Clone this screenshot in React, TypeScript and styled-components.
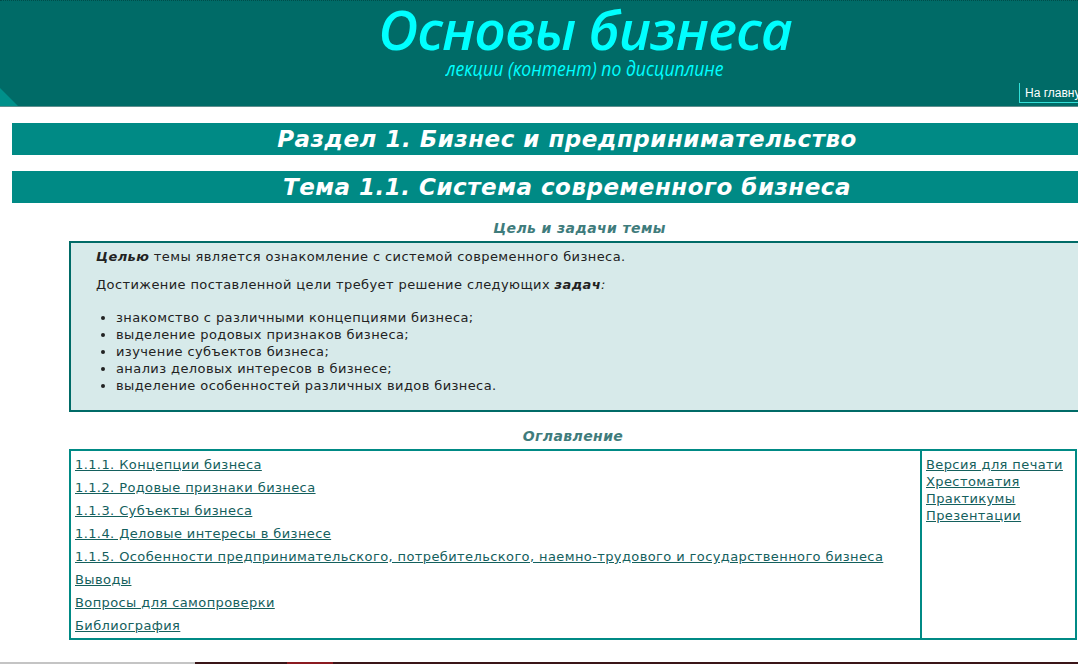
import React from "react";
import styled, { createGlobalStyle } from "styled-components";

const Global = createGlobalStyle`
  html, body { margin: 0; padding: 0; overflow: hidden; background: #fff; }
  body { font-family: "DejaVu Sans", Verdana, sans-serif; font-size: 13px; letter-spacing: 0.4px; color: #222; }
`;

const Page = styled.div`
  width: 1170px;
`;

const Header = styled.header`
  position: relative;
  height: 107px;
  background: #006b67;
  border-top: 1px dotted #004c49;
  border-bottom: 1px solid #5f8f8e;
  box-sizing: border-box;
  display: flex;
  flex-direction: column;
  align-items: center;
  &::before {
    content: "";
    position: absolute;
    left: 0;
    bottom: 0;
    width: 0;
    height: 0;
    border-left: 18px solid #00908a;
    border-top: 18px solid transparent;
  }
`;

const Title = styled.h1`
  margin: 0;
  font-family: "Open Sans", sans-serif;
  font-style: italic;
  font-weight: 600;
  font-size: 55px;
  line-height: 56px;
  color: #00ffff;
  letter-spacing: -1px;
`;

const Subtitle = styled.div`
  font-family: "Open Sans", sans-serif;
  font-style: italic;
  font-size: 20px;
  line-height: 24px;
  letter-spacing: 0;
  color: #00ffff;
  transform: scaleX(0.88);
`;

const NavRow = styled.div`
  align-self: stretch;
  display: flex;
  padding-left: 1019px;
  margin-top: 2px;
`;

const HomeLink = styled.a`
  font-family: "Liberation Sans", Arial, sans-serif;
  font-size: 12px;
  letter-spacing: 0;
  color: #fff;
  text-decoration: none;
  padding: 3px 0 2px 5px;
  border-left: 1px solid #33e0d8;
  border-bottom: 1px solid #33e0d8;
  white-space: nowrap;
`;

const Main = styled.main`
  padding: 16px 0 0 12px;
  display: flex;
  flex-direction: column;
`;

const Band = styled.h2`
  margin: 0 0 16px 0;
  height: 32px;
  width: 1110px;
  background: #008a85;
  color: #fff;
  font-family: "DejaVu Sans", Verdana, sans-serif;
  font-style: italic;
  font-weight: bold;
  font-size: 23px;
  letter-spacing: 0.5px;
  line-height: 32px;
  text-align: center;
`;

const Section = styled.section<{ $w: number }>`
  margin-left: 57px;
  width: ${(p) => p.$w}px;
  display: flex;
  flex-direction: column;
`;

const SectionTitle = styled.div`
  text-align: center;
  font-weight: bold;
  font-style: italic;
  font-size: 14px;
  letter-spacing: 0.4px;
  color: #3f7c7c;
  line-height: 18px;
  margin-bottom: 4px;
`;

const GoalBox = styled.div`
  background: #d7eaea;
  border: 2px solid #006b67;
  padding: 5px 20px 16px 25px;
`;

const P = styled.p`
  margin: 0 0 11px 0;
  line-height: 17px;
`;

const List = styled.ul`
  margin: 16px 0 0 0;
  padding-left: 20px;
  li { line-height: 17px; }
`;

const Toc = styled.div`
  display: grid;
  grid-template-columns: 1fr 153px;
  border: 2px solid #008a85;
`;

const TocMain = styled.div`
  display: flex;
  flex-direction: column;
  padding: 2px 4px 1px 4px;
  border-right: 2px solid #008a85;
`;

const TocSide = styled.div`
  display: flex;
  flex-direction: column;
  align-items: flex-start;
  padding: 5px 4px;
`;

const Link = styled.a<{ $lh: number }>`
  color: #14605d;
  text-decoration: underline;
  line-height: ${(p) => p.$lh}px;
  white-space: nowrap;
`;

const Gap = styled.div`
  height: 15px;
`;

const Strip = styled.div`
  margin-top: 22px;
  display: flex;
  height: 4px;
`;

const StripPart = styled.div<{ $w: string; $c: string }>`
  flex: 0 0 ${(p) => p.$w};
  background: ${(p) => p.$c};
`;

const tasks = [
  "знакомство с различными концепциями бизнеса;",
  "выделение родовых признаков бизнеса;",
  "изучение субъектов бизнеса;",
  "анализ деловых интересов в бизнесе;",
  "выделение особенностей различных видов бизнеса.",
];

const tocLinks = [
  "1.1.1. Концепции бизнеса",
  "1.1.2. Родовые признаки бизнеса",
  "1.1.3. Субъекты бизнеса",
  "1.1.4. Деловые интересы в бизнесе",
  "1.1.5. Особенности предпринимательского, потребительского, наемно-трудового и государственного бизнеса",
  "Выводы",
  "Вопросы для самопроверки",
  "Библиография",
];

const sideLinks = ["Версия для печати", "Хрестоматия", "Практикумы", "Презентации"];

export default function App() {
  return (
    <Page>
      <Global />
      <Header>
        <Title>Основы бизнеса</Title>
        <Subtitle>лекции (контент) по дисциплине</Subtitle>
        <NavRow>
          <HomeLink href="#">На главную</HomeLink>
        </NavRow>
      </Header>
      <Main>
        <Band>Раздел 1. Бизнес и предпринимательство</Band>
        <Band>Тема 1.1. Система современного бизнеса</Band>
        <Section $w={1021}>
          <SectionTitle>Цель и задачи темы</SectionTitle>
          <GoalBox>
            <P>
              <b><i>Целью</i></b> темы является ознакомление с системой современного бизнеса.
            </P>
            <P>
              Достижение поставленной цели требует решение следующих <b><i>задач</i></b><i>:</i>
            </P>
            <List>
              {tasks.map((t) => (
                <li key={t}>{t}</li>
              ))}
            </List>
          </GoalBox>
        </Section>
        <Gap />
        <Section $w={1008}>
          <SectionTitle>Оглавление</SectionTitle>
          <Toc>
            <TocMain>
              {tocLinks.map((t) => (
                <Link key={t} href="#" $lh={23}>{t}</Link>
              ))}
            </TocMain>
            <TocSide>
              {sideLinks.map((t) => (
                <Link key={t} href="#" $lh={17}>{t}</Link>
              ))}
            </TocSide>
          </Toc>
        </Section>
      </Main>
      <Strip>
        <StripPart $w="195px" $c="#c4c4c4" />
        <StripPart $w="92px" $c="#3a1518" />
        <StripPart $w="46px" $c="#8b1a20" />
        <StripPart $w="837px" $c="#3a1518" />
      </Strip>
    </Page>
  );
}
